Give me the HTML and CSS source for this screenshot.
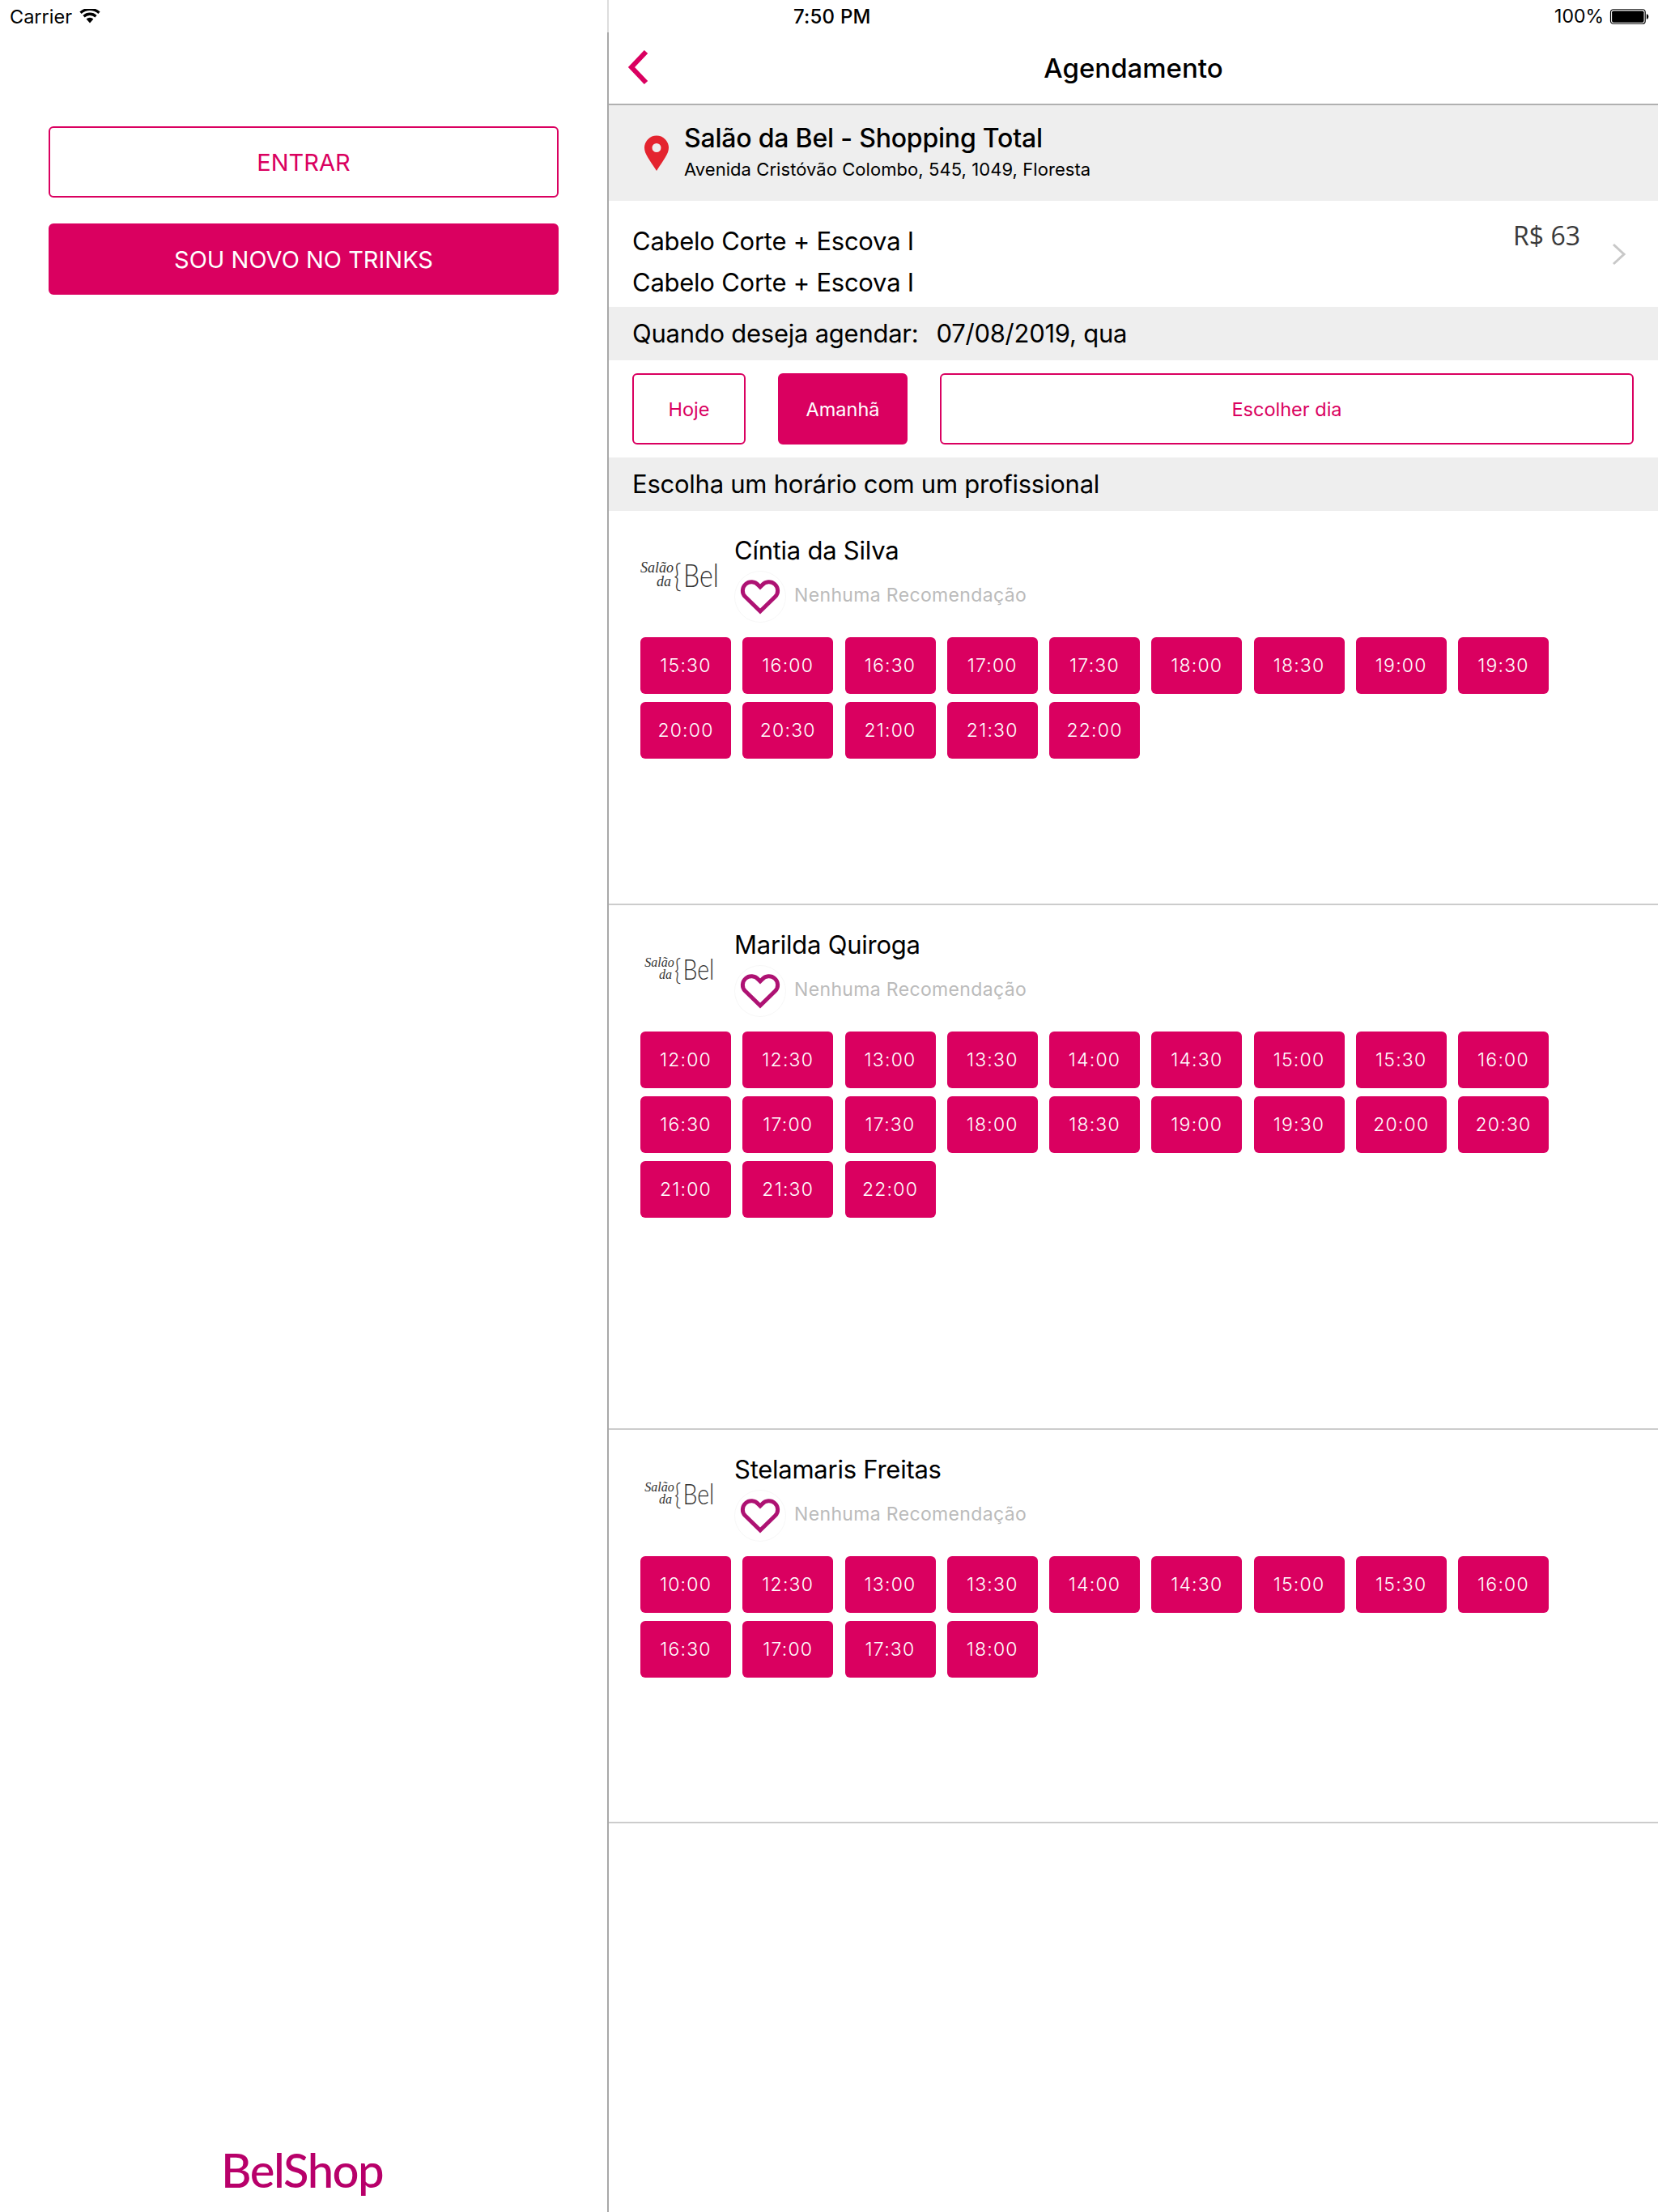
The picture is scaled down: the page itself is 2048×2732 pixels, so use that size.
FILE: index.html
```html
<!DOCTYPE html>
<html lang="pt-BR">
<head>
<meta charset="utf-8">
<title>Agendamento</title>
<link rel="stylesheet" href="styles.css">
</head>
<body>
<div class="app">
  <aside class="side">
    <div class="status status-left">
      <span>Carrier</span>
      <svg class="wifi" viewBox="0 0 26 18" width="26" height="18"><path d="M13 17.5 8.600 12.600a6.400 6.400 0 0 1 8.800 0Z"/><path d="M6.600 10.400 4.400 8a12.600 12.600 0 0 1 17.200 0l-2.200 2.400a9.400 9.400 0 0 0-12.800 0Z"/><path d="M2.600 6 .4 3.600a18.600 18.600 0 0 1 25.200 0L23.400 6a15.400 15.400 0 0 0-20.800 0Z"/></svg>
    </div>
    <div class="auth">
      <button class="btn btn-outline auth-btn">ENTRAR</button>
      <button class="btn btn-solid auth-btn">SOU NOVO NO TRINKS</button>
    </div>
    <div class="brand">BelShop</div>
  </aside>
  <main class="main">
    <div class="status status-main">
      <span class="clock">7:50 PM</span>
      <span class="battery-wrap">
        <span>100%</span>
        <svg class="battery" viewBox="0 0 50 20" width="49" height="19"><rect x=".75" y=".75" width="45" height="18.500" rx="3.500" fill="none" stroke="#000" stroke-width="1.200"/><rect x="2.500" y="2.500" width="41.500" height="15" rx="2" fill="#000"/><path d="M47.500 6.500c1.600.3 2.500 1.600 2.500 3.500s-.9 3.200-2.500 3.500Z" fill="#000"/></svg>
      </span>
    </div>
    <header class="nav">
      <svg class="back" viewBox="0 0 26 42" width="26" height="42"><path d="M23 2 5 21l18 19" fill="none" stroke="#da0060" stroke-width="6"/></svg>
      <h1>Agendamento</h1>
    </header>
    <section class="salon">
      <svg class="pin" viewBox="0 0 32 44" width="32" height="44"><path fill-rule="evenodd" d="M16 44C7 30 1 23 1 15.500A15 15 0 0 1 31 15.500C31 23 25 30 16 44ZM16 10a5.500 5.500 0 1 0 0 11 5.500 5.500 0 0 0 0-11Z" fill="#e4242f"/></svg>
      <div>
        <div class="salon-name">Salão da Bel - Shopping Total</div>
        <div class="salon-addr">Avenida Cristóvão Colombo, 545, 1049, Floresta</div>
      </div>
    </section>
    <section class="service">
      <div class="service-names">
        <div>Cabelo Corte + Escova I</div>
        <div>Cabelo Corte + Escova I</div>
      </div>
      <div class="price">R$ 63</div>
      <svg class="chev" viewBox="0 0 18 28" width="18" height="28"><path d="M2 2l13 12L2 26" fill="none" stroke="#c8c8c8" stroke-width="3"/></svg>
    </section>
    <div class="band"><span>Quando deseja agendar:</span><span class="band-date">07/08/2019, qua</span></div>
    <div class="days">
      <button class="btn btn-outline day day-hoje">Hoje</button>
      <button class="btn btn-solid day day-amanha">Amanhã</button>
      <button class="btn btn-outline day day-escolher">Escolher dia</button>
    </div>
    <div class="band">Escolha um horário com um profissional</div>

    <section class="pro">
      <div class="pro-head">
        <div class="logo"><span class="logo-script">Salão<br>da</span><span class="logo-brace">{</span><span class="logo-bel">Bel</span></div>
        <div class="pro-info">
          <div class="pro-name">Cíntia da Silva</div>
          <div class="rec">
            <svg class="heart" viewBox="-8 -10 64 64" width="64" height="64"><circle cx="24" cy="22" r="31.500" fill="none" stroke="#f7f7f7"/><path d="M24 40 5.500 22C1 17.500 1.500 10.500 6 6.500s11.500-3.500 15.500 1L24 10l2.500-2.500c4-4.500 11-5 15.500-1s5 11 .5 15.500Z" fill="none" stroke="#ae1273" stroke-width="5"/></svg>
            <span class="rec-text">Nenhuma Recomendação</span>
          </div>
        </div>
      </div>
      <div class="slots">
        <button class="btn btn-solid slot">15:30</button><button class="btn btn-solid slot">16:00</button><button class="btn btn-solid slot">16:30</button><button class="btn btn-solid slot">17:00</button><button class="btn btn-solid slot">17:30</button><button class="btn btn-solid slot">18:00</button><button class="btn btn-solid slot">18:30</button><button class="btn btn-solid slot">19:00</button><button class="btn btn-solid slot">19:30</button>
        <button class="btn btn-solid slot">20:00</button><button class="btn btn-solid slot">20:30</button><button class="btn btn-solid slot">21:00</button><button class="btn btn-solid slot">21:30</button><button class="btn btn-solid slot">22:00</button>
      </div>
    </section>

    <section class="pro pro-tall">
      <div class="pro-head">
        <div class="logo logo-small"><span class="logo-script">Salão<br>da</span><span class="logo-brace">{</span><span class="logo-bel">Bel</span></div>
        <div class="pro-info">
          <div class="pro-name">Marilda Quiroga</div>
          <div class="rec">
            <svg class="heart" viewBox="-8 -10 64 64" width="64" height="64"><circle cx="24" cy="22" r="31.500" fill="none" stroke="#f7f7f7"/><path d="M24 40 5.500 22C1 17.500 1.500 10.500 6 6.500s11.500-3.500 15.500 1L24 10l2.500-2.500c4-4.500 11-5 15.500-1s5 11 .5 15.500Z" fill="none" stroke="#ae1273" stroke-width="5"/></svg>
            <span class="rec-text">Nenhuma Recomendação</span>
          </div>
        </div>
      </div>
      <div class="slots">
        <button class="btn btn-solid slot">12:00</button><button class="btn btn-solid slot">12:30</button><button class="btn btn-solid slot">13:00</button><button class="btn btn-solid slot">13:30</button><button class="btn btn-solid slot">14:00</button><button class="btn btn-solid slot">14:30</button><button class="btn btn-solid slot">15:00</button><button class="btn btn-solid slot">15:30</button><button class="btn btn-solid slot">16:00</button>
        <button class="btn btn-solid slot">16:30</button><button class="btn btn-solid slot">17:00</button><button class="btn btn-solid slot">17:30</button><button class="btn btn-solid slot">18:00</button><button class="btn btn-solid slot">18:30</button><button class="btn btn-solid slot">19:00</button><button class="btn btn-solid slot">19:30</button><button class="btn btn-solid slot">20:00</button><button class="btn btn-solid slot">20:30</button>
        <button class="btn btn-solid slot">21:00</button><button class="btn btn-solid slot">21:30</button><button class="btn btn-solid slot">22:00</button>
      </div>
    </section>

    <section class="pro pro-last">
      <div class="pro-head">
        <div class="logo logo-small"><span class="logo-script">Salão<br>da</span><span class="logo-brace">{</span><span class="logo-bel">Bel</span></div>
        <div class="pro-info">
          <div class="pro-name">Stelamaris Freitas</div>
          <div class="rec">
            <svg class="heart" viewBox="-8 -10 64 64" width="64" height="64"><circle cx="24" cy="22" r="31.500" fill="none" stroke="#f7f7f7"/><path d="M24 40 5.500 22C1 17.500 1.500 10.500 6 6.500s11.500-3.500 15.500 1L24 10l2.500-2.500c4-4.500 11-5 15.500-1s5 11 .5 15.500Z" fill="none" stroke="#ae1273" stroke-width="5"/></svg>
            <span class="rec-text">Nenhuma Recomendação</span>
          </div>
        </div>
      </div>
      <div class="slots">
        <button class="btn btn-solid slot">10:00</button><button class="btn btn-solid slot">12:30</button><button class="btn btn-solid slot">13:00</button><button class="btn btn-solid slot">13:30</button><button class="btn btn-solid slot">14:00</button><button class="btn btn-solid slot">14:30</button><button class="btn btn-solid slot">15:00</button><button class="btn btn-solid slot">15:30</button><button class="btn btn-solid slot">16:00</button>
        <button class="btn btn-solid slot">16:30</button><button class="btn btn-solid slot">17:00</button><button class="btn btn-solid slot">17:30</button><button class="btn btn-solid slot">18:00</button>
      </div>
    </section>
  </main>
</div>
</body>
</html>
```
FILE: styles.css
```css
* { box-sizing: border-box; }
html, body { margin: 0; padding: 0; background: #fff; }
body { font-family: Inter, "Liberation Sans", sans-serif; color: #000; }
.app { display: flex; width: 2048px; height: 2732px; overflow: hidden; }
.side { width: 750px; display: flex; flex-direction: column; flex: none; }
.main { width: 1298px; flex: none; border-left: 2px solid #a8a8a8; }

.status { height: 40px; display: flex; align-items: center; font-size: 23.500px; background: #fff; }
.status-left { padding-left: 12px; gap: 9px; }
.wifi { fill: #000; }
.status-main { position: relative; justify-content: flex-end; padding-right: 11px; margin-left: -2px; border-left: 2px solid #ddd; }
.clock { position: absolute; left: 228px; font-weight: 500; font-size: 24px; letter-spacing: .2px; }
.battery-wrap { display: flex; align-items: center; gap: 7px; font-size: 23px; }

.btn { display: block; font-family: inherit; border-radius: 6px; padding: 0; border: 2px solid #da0060; }
.btn-outline { background: #fff; color: #da0060; }
.btn-solid { background: #da0060; color: #fff; }

.auth { display: flex; flex-direction: column; gap: 32px; padding: 116px 60px 0; }
.auth-btn { height: 88px; font-size: 29px; width: 630px; }
.brand { margin-top: auto; padding: 0 0 14px 273px; font-family: Lato, sans-serif; font-size: 58px; line-height: 76px; letter-spacing: -1.500px; font-weight: 500; color: #b8006a; }

.nav { height: 90px; position: relative; display: flex; align-items: center; justify-content: center; border-bottom: 2px solid #b0b0b0; }
.nav h1 { margin: 0; font-size: 33px; font-weight: 500; }
.back { position: absolute; left: 23px; top: 22px; }

.salon { height: 118px; background: #eee; display: flex; align-items: center; gap: 18px; padding: 0 0 0 43px; }
.salon-name { font-size: 32px; font-weight: 500; line-height: 44px; margin: -6px 0 2px; letter-spacing: -.2px; }
.salon-addr { font-size: 22px; line-height: 28px; letter-spacing: .06px; }

.service { height: 131px; position: relative; padding: 27px 0 0 29px; font-size: 31px; letter-spacing: -.25px; }
.service-names div { height: 51px; line-height: 46px; }
.price { position: absolute; right: 96px; top: 21px; font-family: "Open Sans", sans-serif; color: #3a3a3a; font-size: 32px; letter-spacing: 0; }
.chev { position: absolute; right: 39px; top: 52px; }

.band { height: 66px; background: #eee; padding-left: 29px; font-size: 31px; letter-spacing: -.25px; line-height: 66px; }
.band-date { margin-left: 22px; }

.days { display: flex; gap: 40px; padding: 16px 30px 16px 29px; }
.day { height: 88px; font-size: 23.500px; }
.day-hoje { width: 140px; }
.day-amanha { width: 160px; }
.day-escolher { flex: 1; }

.pro { border-bottom: 2px solid #ccc; padding: 24px 0 179px 39px; }
.pro-tall { padding-bottom: 260px; }
.pro-last { padding-bottom: 178px; }
.pro-head { display: flex; height: 132px; }
.pro-info { margin-left: 20px; padding-top: 3px; }
.logo { width: 96px; height: 70px; margin-top: 20px; display: flex; align-items: center; color: #333; flex: none; }
.logo-small { transform: scale(.89); }
.logo-script { flex: none; width: 38px; font-family: "Liberation Serif", serif; font-style: italic; font-size: 18px; line-height: 17px; text-align: right; }
.logo-brace { flex: none; margin-left: 2px; font-family: Lato, sans-serif; font-weight: 300; font-size: 40px; line-height: 44px; transform: scaleX(.8); }
.logo-bel { flex: none; margin-left: 1px; font-family: Lato, sans-serif; font-weight: 300; font-size: 40px; line-height: 44px; transform: scaleX(.8); transform-origin: left center; }
.pro-name { font-size: 31px; letter-spacing: -.25px; line-height: 44px; white-space: nowrap; }
.rec { display: flex; align-items: center; gap: 10px; margin: -1px 0 -10px 0; }
.heart { margin-top: 4px; }
.rec-text { font-size: 23px; letter-spacing: .35px; color: #bbb; white-space: nowrap; }
.slots { display: grid; grid-template-columns: repeat(9, 112px); grid-auto-rows: 70px; gap: 10px 14.250px; }
.slot { border: none; font-size: 23px; font-weight: 300; letter-spacing: 1.200px; }
```
